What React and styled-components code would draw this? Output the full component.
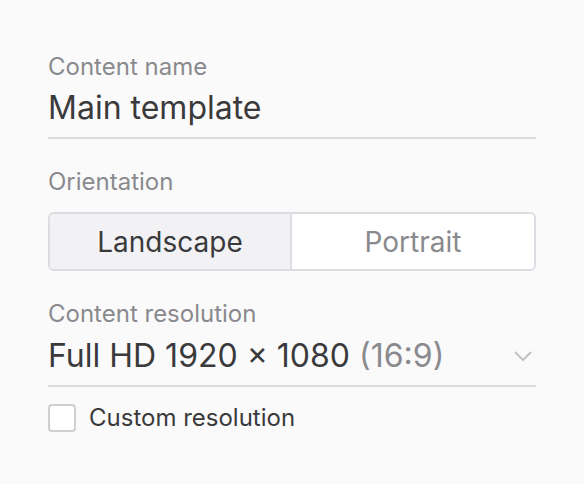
import React, { useState } from 'react';
import styled, { createGlobalStyle } from 'styled-components';

const GlobalStyle = createGlobalStyle`
  body {
    margin: 0;
    background: #fafafa;
    font-family: Inter, "Noto Sans", sans-serif;
    color: #3a3a3c;
  }
`;

const Panel = styled.div`
  width: 488px;
  padding: 53px 48px 40px;
  display: flex;
  flex-direction: column;
`;

const Label = styled.div`
  font-size: 24px;
  line-height: 28px;
  color: #8a8a8e;
  margin-top: ${p => p.$gap || 0}px;
`;

const Field = styled.div`
  display: flex;
  align-items: center;
  justify-content: space-between;
  margin-top: ${p => p.$gap || 7}px;
  padding: 0 4px 9px 0;
  line-height: 40px;
  border-bottom: 2px solid #dcdce0;
  font-size: 32px;
  color: #3a3a3c;
`;

const Muted = styled.span`
  color: #8a8a8e;
`;

const Segmented = styled.div`
  display: grid;
  grid-template-columns: 1fr 1fr;
  margin-top: 16px;
  border: 2px solid #dcdde2;
  border-radius: 6px;
  overflow: hidden;
`;

const Segment = styled.button`
  height: 55px;
  border: none;
  border-right: ${p => (p.$first ? '2px solid #dcdde2' : 'none')};
  background: ${p => (p.$active ? '#f2f2f5' : '#ffffff')};
  color: ${p => (p.$active ? '#3a3a3c' : '#8a8a8e')};
  font-family: inherit;
  font-size: 28px;
  cursor: pointer;
  padding: 0;
`;

const CheckRow = styled.label`
  display: flex;
  align-items: center;
  gap: 13px;
  margin-top: 17px;
  font-size: 24px;
  line-height: 28px;
  color: #3a3a3c;
`;

const Box = styled.span`
  width: 24px;
  height: 24px;
  border: 2px solid #cfcfd3;
  border-radius: 4px;
  background: #fff;
`;

const Chevron = () => (
  <svg width="18" height="11" viewBox="0 0 18 11" fill="none">
    <path d="M1.5 1.5l7.5 7.5 7.5-7.5" stroke="#c2c2c6" strokeWidth="2" strokeLinecap="round" />
  </svg>
);

export default function App() {
  const [orientation, setOrientation] = useState('landscape');
  return (
    <Panel>
      <GlobalStyle />
      <Label>Content name</Label>
      <Field>Main template</Field>

      <Label $gap={29}>Orientation</Label>
      <Segmented>
        <Segment $first $active={orientation === 'landscape'} onClick={() => setOrientation('landscape')}>
          Landscape
        </Segment>
        <Segment $active={orientation === 'portrait'} onClick={() => setOrientation('portrait')}>
          Portrait
        </Segment>
      </Segmented>

      <Label $gap={29}>Content resolution</Label>
      <Field $gap={8}>
        <span>
          Full HD 1920 × 1080 <Muted>(16:9)</Muted>
        </span>
        <Chevron />
      </Field>

      <CheckRow>
        <Box />
        Custom resolution
      </CheckRow>
    </Panel>
  );
}
